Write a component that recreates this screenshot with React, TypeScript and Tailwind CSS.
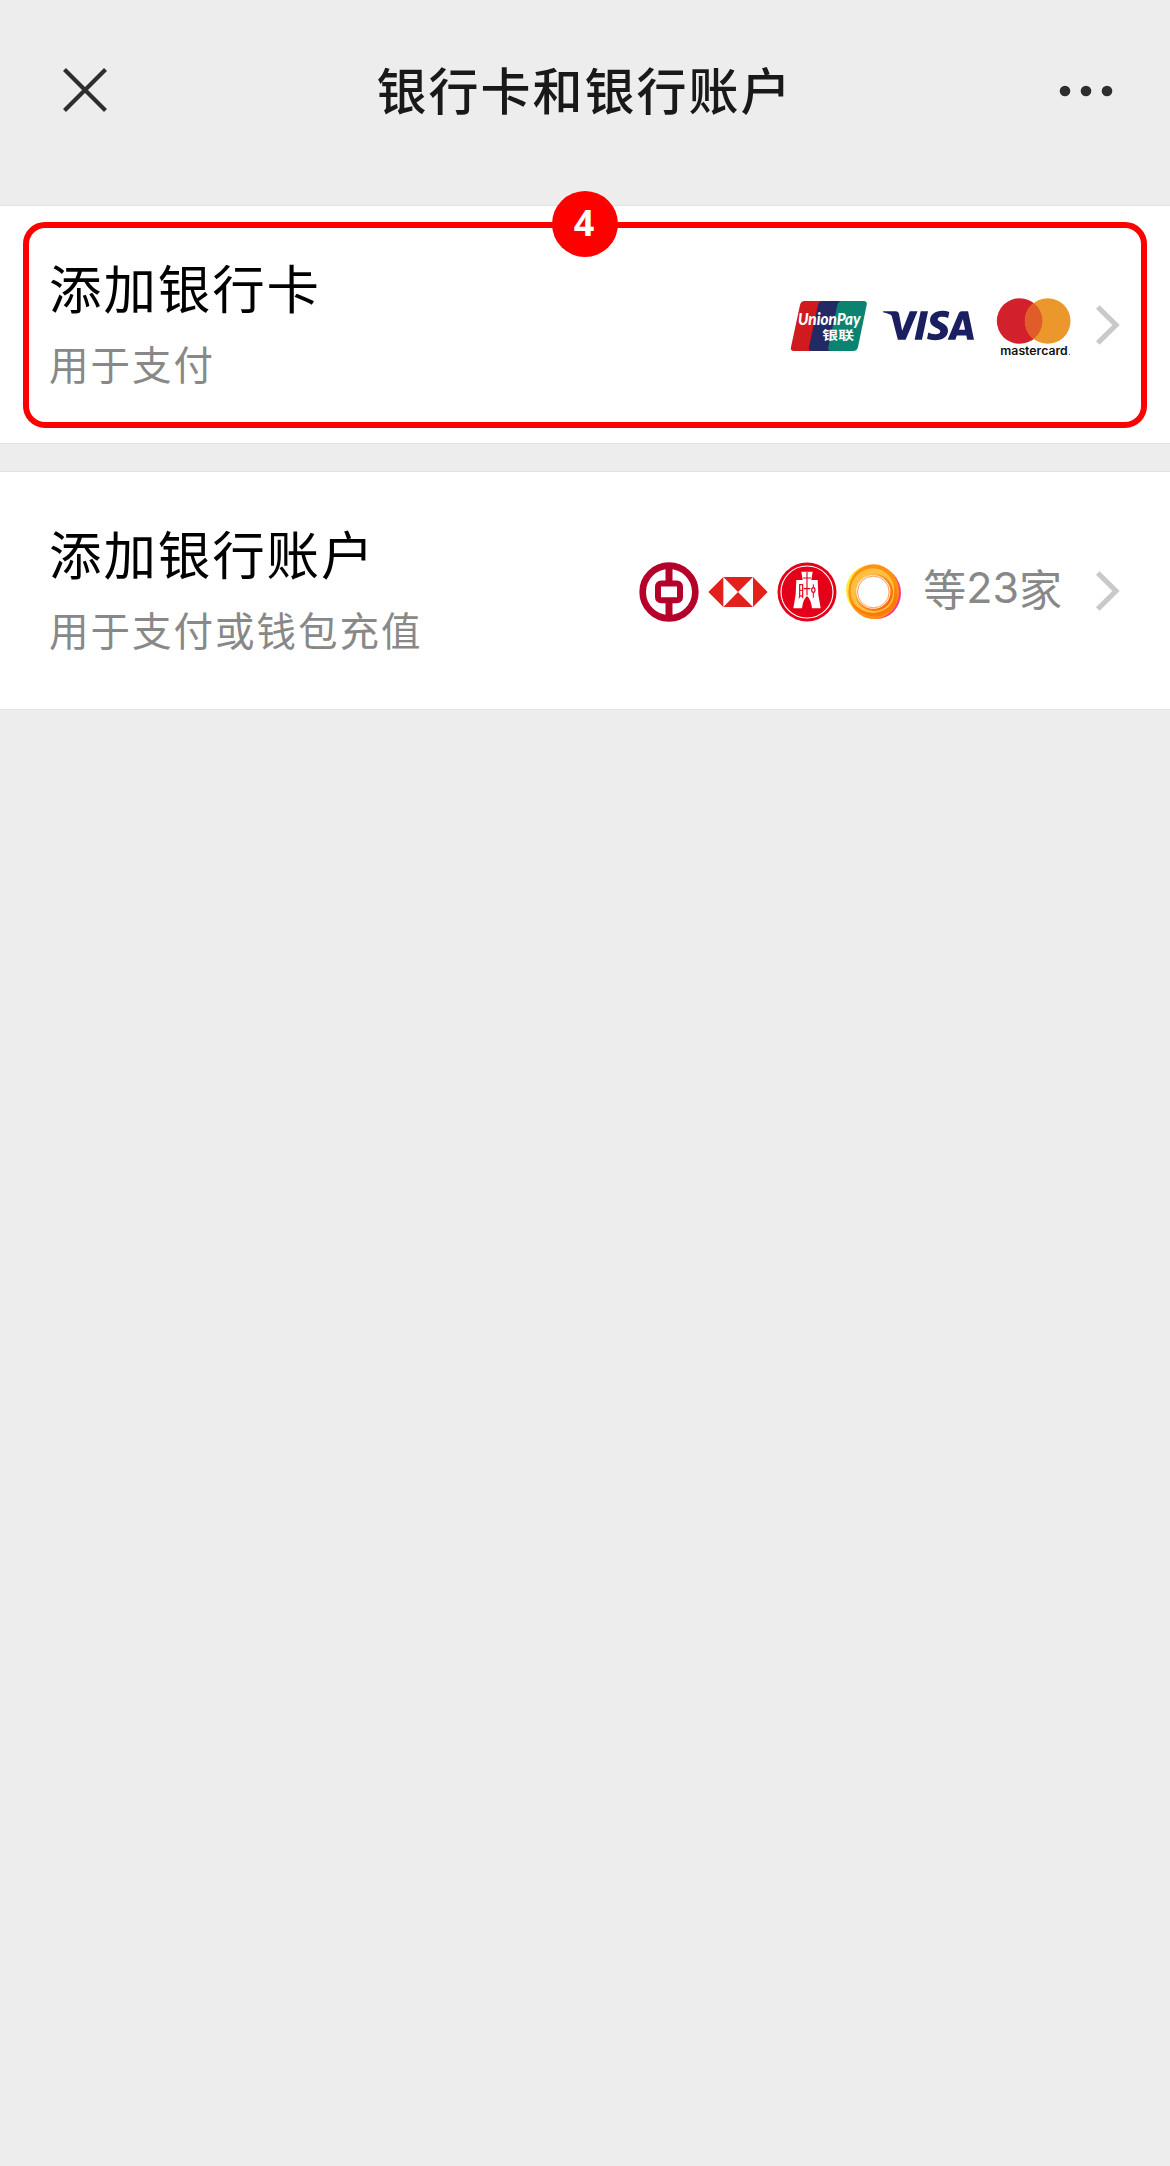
import React from 'react';
import { SiVisa } from 'react-icons/si';

const CJK = "font-['Noto_Sans_CJK_SC',sans-serif]";

type EntryRowProps = {
  title: string;
  subtitle: string;
  children: React.ReactNode;
};

const CloseIcon = () => (
  <svg width="46" height="46" viewBox="0 0 46 46" fill="none" stroke="#2e2e2e" strokeWidth="4.2">
    <path d="M2.5 2.5 L43.5 43.5 M43.5 2.5 L2.5 43.5" />
  </svg>
);

const MoreIcon = () => (
  <svg width="54" height="12" viewBox="0 0 54 12" fill="#2e2e2e">
    <circle cx="6" cy="6" r="5.3" />
    <circle cx="27" cy="6" r="5.3" />
    <circle cx="48" cy="6" r="5.3" />
  </svg>
);

const Chevron = () => (
  <svg width="26" height="42" viewBox="0 0 26 42" fill="none" stroke="#c9c9c9" strokeWidth="5.2">
    <path d="M3.8 3 L22 21 L3.8 39" />
  </svg>
);

const UnionPayLogo = () => (
  <svg width="78" height="52" viewBox="30 60 234 156">
    <path d="M74 63 H138 L104 213 H42 Q30 213 33 201 L60 75 Q63 63 74 63 Z" fill="#d01a1d" />
    <path d="M128 63 H200 L170 213 H96 Q84 213 87 201 L114 75 Q117 63 128 63 Z" fill="#232a63" />
    <path d="M185 63 H250 Q263 63 260 75 L234 201 Q231 213 220 213 H154 Q142 213 145 201 L172 75 Q175 63 185 63 Z" fill="#0a8370" />
    <text x="54" y="135" fill="#fff" fontSize="48" fontWeight="900" fontStyle="italic" textLength="188" lengthAdjust="spacingAndGlyphs" className="font-[Lato,sans-serif]">
      UnionPay
    </text>
    <text x="127" y="179" fill="#fff" fontSize="37" fontWeight="700" textLength="95" lengthAdjust="spacingAndGlyphs" className={CJK}>
      银联
    </text>
  </svg>
);

const MastercardLogo = () => (
  <svg width="76" height="60" viewBox="648 51 228 180">
    <circle cx="719" cy="123" r="68.5" fill="#d2202c" />
    <circle cx="803" cy="123" r="68.5" fill="#ec972c" />
    <path d="M761 69 A68.5 68.5 0 0 1 761 177 A68.5 68.5 0 0 1 761 69 Z" fill="#e05c28" />
    <text x="661" y="225" fill="#111" fontSize="34" fontWeight="600" textLength="202" lengthAdjust="spacingAndGlyphs" className="font-[Inter,sans-serif]">
      mastercard
    </text>
    <rect x="867" y="222" width="3" height="3" fill="#555" />
  </svg>
);

const BankOfChinaLogo = () => (
  <svg width="60" height="60" viewBox="0 0 180 180" fill="none" stroke="#b5002a">
    <circle cx="90" cy="90" r="79" strokeWidth="20" />
    <path d="M90 10 V60 M90 122 V170" strokeWidth="21" />
    <rect x="57" y="64.5" width="66" height="50" rx="9" strokeWidth="18" />
  </svg>
);

const HsbcLogo = () => (
  <svg width="60" height="30" viewBox="0 0 180 90">
    <rect x="45" y="0" width="90" height="90" fill="#fff" />
    <path d="M1 45 L46 0 V90 Z M46 0 H135 L90 45 Z M46 90 H135 L90 45 Z M135 0 L179 45 L135 90 Z" fill="#e3211c" />
  </svg>
);

const HangSengLogo = () => (
  <svg width="60" height="60" viewBox="0 0 180 180">
    <circle cx="90" cy="90" r="88.5" fill="#e50019" />
    <circle cx="90" cy="90" r="78" fill="none" stroke="#fff" strokeWidth="3.5" />
    <path d="M73 29 H107 L103 54 H122 L124 98 L131 139 H105 Q102 112 90 102 Q78 112 75 139 H49 L56 98 L58 54 H77 Z" fill="#fff" />
    <path d="M90 29 V100 M78 48 H102 M80 80 H100" fill="none" stroke="#e50019" strokeWidth="3.5" />
    <rect x="68" y="68" width="9" height="34" fill="none" stroke="#e50019" strokeWidth="3.5" />
    <path d="M68 85 H77 M68 102 L66 109 M77 102 V109" fill="none" stroke="#e50019" strokeWidth="3" />
    <ellipse cx="109" cy="84" rx="5" ry="7" fill="none" stroke="#e50019" strokeWidth="3.5" />
    <path d="M109 67 V77 M109 91 V107" stroke="#e50019" strokeWidth="3" />
  </svg>
);

const RingLogo = () => (
  <svg width="56" height="58" viewBox="0 0 168 174">
    <defs>
      <linearGradient id="ringInner" x1="0" y1="0" x2="1" y2="1">
        <stop offset="0" stopColor="#ffe08a" />
        <stop offset="0.45" stopColor="#ff9020" />
        <stop offset="1" stopColor="#ff5a00" />
      </linearGradient>
    </defs>
    <ellipse cx="74" cy="82" rx="74" ry="76" fill="#ffe83a" />
    <ellipse cx="91" cy="90" rx="74" ry="78" fill="#f5407a" />
    <ellipse cx="83" cy="86" rx="76" ry="82" fill="#ff9210" />
    <ellipse cx="80" cy="84" rx="66" ry="68" fill="#ffc040" />
    <path d="M18 118 Q72 176 132 130 Q150 108 144 60 Q162 96 146 130 Q118 164 78 160 Q36 154 18 118 Z" fill="#ff7a08" />
    <ellipse cx="84" cy="88" rx="57" ry="56" fill="url(#ringInner)" />
    <ellipse cx="82" cy="87" rx="51" ry="50" fill="#fff" />
    <ellipse cx="82" cy="87" rx="47.5" ry="47.5" fill="none" stroke="#ff8a2a" strokeWidth="2.5" />
  </svg>
);

const EntryRow = ({ title, subtitle, children }: EntryRowProps) => (
  <div className="flex h-[239px] items-center justify-between border-y border-[#e3e3e3] bg-white pl-[49px] pr-[50px]">
    <div className="flex flex-col pt-[2px]">
      <span className="text-[52.5px] leading-[75px] tracking-[1.9px] text-black">{title}</span>
      <span className="text-[39.5px] leading-[78px] tracking-[2px] text-[#888]">{subtitle}</span>
    </div>
    <div className="flex items-center">{children}</div>
  </div>
);

export default function App() {
  return (
    <div className={`min-h-[2166px] w-[1170px] bg-[#ededed] ${CJK}`}>
      <header className="flex h-[205px] items-start justify-between pl-[62px] pr-[57px]">
        <div className="flex h-[180px] w-[54px] items-center">
          <CloseIcon />
        </div>
        <h1 className="mr-[6px] text-[50px] font-medium leading-[176px] tracking-[2px] text-[#191919]">银行卡和银行账户</h1>
        <div className="flex h-[182px] w-[54px] items-center">
          <MoreIcon />
        </div>
      </header>

      <main className="flex flex-col gap-[27px]">
        <section className="relative">
          <EntryRow title="添加银行卡" subtitle="用于支付">
            <div className="mt-[3px]">
              <UnionPayLogo />
            </div>
            <SiVisa className="ml-[15px] mr-px mt-[2px] h-[91px] w-[91px] text-[#1a1f62]" />
            <div className="ml-[21px] mt-[5px]">
              <MastercardLogo />
            </div>
            <div className="ml-[22px]">
              <Chevron />
            </div>
          </EntryRow>
          {/* step marker around the first entry */}
          <div className="absolute left-[23px] top-[17px] h-[206px] w-[1124px] rounded-[22px] border-[6px] border-[#f00]" />
          <div className="absolute left-[552px] top-[-14px] flex h-[66px] w-[66px] items-center justify-center rounded-full bg-[#f00] pb-[2px] pr-[2px] font-['Open_Sans',sans-serif] text-[36px] font-bold leading-none text-white">
            4
          </div>
        </section>

        <EntryRow title="添加银行账户" subtitle="用于支付或钱包充值">
          <div className="mt-[2px] flex items-center gap-[9px]">
            <BankOfChinaLogo />
            <HsbcLogo />
            <HangSengLogo />
            <RingLogo />
          </div>
          <span className="-mt-[7px] ml-[21px] flex items-center text-[43px] leading-[60px] text-[#888]">
            等<span className="font-[Inter,sans-serif]">23</span>家
          </span>
          <div className="ml-[32px]">
            <Chevron />
          </div>
        </EntryRow>
      </main>
    </div>
  );
}
